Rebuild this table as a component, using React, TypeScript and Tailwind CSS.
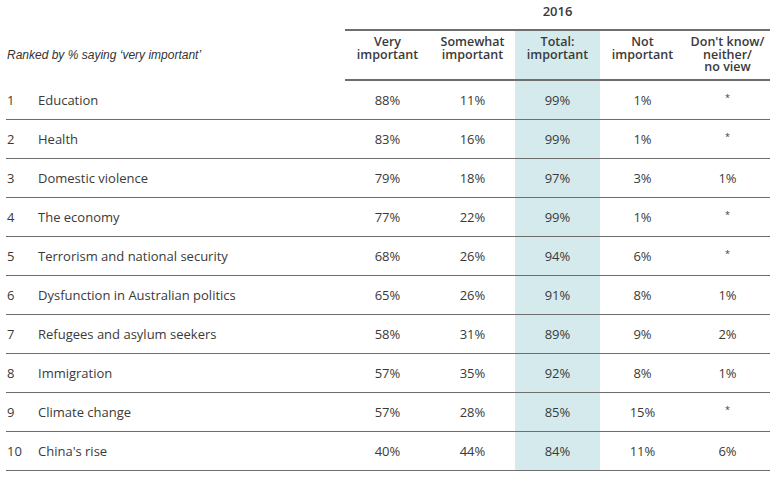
import React from "react";

const rows: [string, string, string, string, string, string, string][] = [
  ["1", "Education", "88%", "11%", "99%", "1%", "*"],
  ["2", "Health", "83%", "16%", "99%", "1%", "*"],
  ["3", "Domestic violence", "79%", "18%", "97%", "3%", "1%"],
  ["4", "The economy", "77%", "22%", "99%", "1%", "*"],
  ["5", "Terrorism and national security", "68%", "26%", "94%", "6%", "*"],
  ["6", "Dysfunction in Australian politics", "65%", "26%", "91%", "8%", "1%"],
  ["7", "Refugees and asylum seekers", "58%", "31%", "89%", "9%", "2%"],
  ["8", "Immigration", "57%", "35%", "92%", "8%", "1%"],
  ["9", "Climate change", "57%", "28%", "85%", "15%", "*"],
  ["10", "China's rise", "40%", "44%", "84%", "11%", "6%"],
];

const headers: string[][] = [
  ["Very", "important"],
  ["Somewhat", "important"],
  ["Total:", "important"],
  ["Not", "important"],
  ["Don't know/", "neither/", "no view"],
];

export default function App() {
  return (
    <div
      className="w-[777px] h-[483px] bg-white text-[#3a3a3a] pl-[6px]"
      style={{ fontFamily: '"Open Sans", sans-serif' }}
    >
      <div className="w-[764px] flex flex-col">
        {/* Year row */}
        <div className="flex h-[29px]">
          <div className="w-[339px]" />
          <div className="w-[425px] flex items-center justify-center text-[13px] font-semibold pb-[5px]">
            2016
          </div>
        </div>
        {/* Header row */}
        <div className="flex h-[52px]">
          <div
            className="w-[339px] flex items-center pl-[1px] text-[12px] italic text-[#333]"
            style={{ fontFamily: '"Liberation Sans", Arial, sans-serif' }}
          >
            Ranked by % saying ‘very important’
          </div>
          <div className="w-[425px] flex border-t-2 border-b-2 border-[#6e6e6e]">
            {headers.map((h, i) => (
              <div
                key={i}
                className={`w-[85px] flex flex-col items-center pt-[5px] text-[12.5px] leading-[12.5px] font-semibold ${
                  i === 2 ? "bg-[#d5eaed]" : ""
                }`}
              >
                {h.map((l, j) => (
                  <span key={j} className="block h-[12.5px] leading-[12.5px] whitespace-nowrap">
                    {l}
                  </span>
                ))}
              </div>
            ))}
          </div>
        </div>
        {/* Data rows */}
        {rows.map((r) => (
          <div key={r[0]} className="flex h-[39px] border-b border-[#6e6e6e] text-[13px]">
            <div className="w-[32px] flex items-center pl-[1px] pt-[1px]">{r[0]}</div>
            <div className="w-[307px] flex items-center pt-[1px]">{r[1]}</div>
            {r.slice(2).map((v, i) => (
              <div
                key={i}
                className={`w-[85px] flex items-center justify-center pt-[1px] ${
                  i === 2 ? "bg-[#d5eaed]" : ""
                }`}
              >
                {v === "*" ? <span className="text-[9px] -mt-[6px]">*</span> : v}
              </div>
            ))}
          </div>
        ))}
      </div>
    </div>
  );
}
